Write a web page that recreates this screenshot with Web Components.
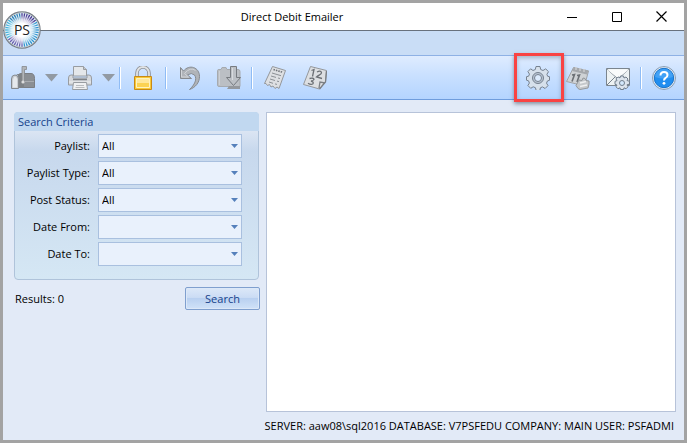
<!DOCTYPE html>
<html lang="en">
<head>
<meta charset="utf-8">
<title>Direct Debit Emailer</title>
<style>
html, body { height: 100%; margin: 0; }
body { font: 11px/16px "Open Sans", "Noto Sans", sans-serif; color: #000; }
</style>
</head>
<body>
<debit-app></debit-app>
<script>
const define = (name, html, init) => {
  const tpl = document.createElement('template');
  tpl.innerHTML = html;
  customElements.define(name, class extends HTMLElement {
    constructor() {
      super();
      this.attachShadow({ mode: 'open' }).append(tpl.content.cloneNode(true));
    }
    connectedCallback() { if (init) init(this, this.shadowRoot); }
  });
};

define('tool-button', `
<style>
:host { display: block; position: relative; flex: none; }
button { display: block; margin: 0; padding: 0; border: 0; background: none; }
:host([highlight])::after {
  content: ""; position: absolute; inset: -13px -14px -12px -12px;
  border: 3px solid #f94343; box-shadow: 0 2px 4px #3458, inset 0 2px 4px #3455;
  pointer-events: none;
}
</style>
<button type="button"><slot></slot></button>`,
(host, root) => root.querySelector('button').setAttribute('aria-label', host.getAttribute('name')));

define('split-button', `
<style>
:host { display: flex; align-items: center; gap: 10px; flex: none; }
button { display: block; padding: 0; border: 0; background: none; }
svg { display: block; }
</style>
<slot></slot>
<button type="button" aria-label="More options"><svg width="13" height="8"><path d="M0 0h13L6.500 7.500z" fill="#929aa3"/></svg></button>`);

define('tool-separator', `
<style>
:host { display: block; flex: none; width: 1px; height: 22px; margin: 0 10px; background: #8fbcf5; border-right: 1px solid #fff; }
:host([tight]) { margin-left: 4px; }
</style>`);

define('app-logo', `
<style>:host { display: block; } svg { display: block; } text { font: 14px "Open Sans", sans-serif; }</style>
<svg width="38" height="38" viewBox="0 0 38 38" role="img" aria-label="PS">
<defs>
<radialGradient id="glow"><stop offset=".45" stop-color="#fff"/><stop offset=".7" stop-color="#fff" stop-opacity=".75"/><stop offset="1" stop-color="#fff" stop-opacity="0"/></radialGradient>
</defs>
<circle cx="19" cy="19" r="18" fill="#e6f3fb" stroke="#777d84" stroke-width="1.500"/>
<g id="rays" stroke-width="1.300"></g>
<circle cx="19" cy="19" r="15" fill="url(#glow)"/>
<circle cx="19" cy="19" r="17.300" fill="none" stroke="#b9c4cb"/>
<text x="19" y="24" text-anchor="middle" fill="#222">PS</text>
</svg>`,
(host, root) => {
  const g = root.getElementById('rays');
  for (let i = 0; i < 40; i++) {
    const a = i * 9;
    const l = document.createElementNS('http://www.w3.org/2000/svg', 'line');
    l.setAttribute('x1', 19); l.setAttribute('x2', 19);
    l.setAttribute('y1', 2); l.setAttribute('y2', 12);
    l.setAttribute('transform', `rotate(${a} 19 19)`);
    l.setAttribute('stroke', a < 55 ? '#4b3a93' : a < 180 ? '#2d93cf' : a < 235 ? '#6a5fae' : a < 310 ? '#3eb0da' : '#2b7fb5');
    g.append(l);
  }
});

define('window-bar', `
<style>
:host { display: grid; grid-template-columns: 1fr auto; align-items: center; height: 27px; padding-left: 32px; background: #fff; border-bottom: 1px solid #68717d; }
h1 { margin: 0; font-weight: normal; font-size: 11px; line-height: 16px; text-align: center; }
.controls { display: flex; justify-content: flex-end; }
button { display: grid; place-items: center; width: 45px; height: 26px; padding: 0; border: 0; background: none; }
svg { fill: none; stroke: #000; }
</style>
<h1><slot></slot></h1>
<div class="controls">
<button type="button" aria-label="Minimize"><svg width="10" height="10"><path d="M0 5.500h10"/></svg></button>
<button type="button" aria-label="Maximize"><svg width="10" height="10"><path d="M.5.5h9v9h-9z"/></svg></button>
<button type="button" aria-label="Close"><svg width="11" height="11"><path d="M.5.5l10 10M10.500.5l-10 10" stroke-width="1.200"/></svg></button>
</div>`);

define('combo-field', `
<style>
:host { display: grid; grid-template-columns: 75px minmax(0, 1fr); column-gap: 8px; align-items: center; }
label { text-align: right; white-space: nowrap; }
.box { position: relative; display: block; }
select { appearance: none; display: block; box-sizing: border-box; width: 100%; height: 24px; margin: 0; padding: 0 18px 0 3px; border: 1px solid #a9c0df; border-radius: 0; background: #e9f1fc; font: inherit; color: #000; }
svg { position: absolute; right: 3px; top: 10px; pointer-events: none; }
</style>
<label for="value"></label>
<span class="box"><select id="value"><option></option></select>
<svg width="9" height="5"><path d="M1 0h7L4.500 4z" fill="#5580bb"/></svg></span>`,
(host, root) => {
  root.querySelector('label').textContent = host.getAttribute('label');
  root.querySelector('option').textContent = host.getAttribute('value') || '';
});

define('criteria-panel', `
<style>
:host { display: block; border: 1px solid #afc3da; border-radius: 4px; background: linear-gradient(#dbe5f3 18px, #c7d8ed 38px, #d5e7f4); }
h2 { margin: -1px -1px 0; padding: 1px 4px 0; height: 18px; font-size: inherit; line-height: 18px; font-weight: normal; color: #15428b; background: #c1d8f0; border-radius: 4px 4px 0 0; }
.fields { display: grid; gap: 3px; padding: 3px 16px 13px 0; }
</style>
<h2><slot name="heading"></slot></h2>
<div class="fields"><slot></slot></div>`);

define('search-button', `
<style>
button { display: block; box-sizing: border-box; width: 75px; height: 23px; padding: 0; border: 1px solid #7f9fce; border-radius: 2px; box-shadow: inset 0 0 0 1px #dce8f8; background: linear-gradient(#dce8f8, #cbdcf4 45%, #b9d0f0 50%, #d0e2f8); font: inherit; color: #15428b; }
</style>
<button type="button"><slot></slot></button>`);

define('debit-app', `
<style>
:host { display: flex; flex-direction: column; box-sizing: border-box; min-height: 100%; border: 3px solid #a3a3a3; background: #e2eaf7; position: relative; }
app-logo { position: absolute; left: 0; top: 8px; }
.ribbon { height: 24px; background: #c9ddf6; border-bottom: 1px solid #8eb1e5; }
.toolbar { display: flex; align-items: center; height: 43px; padding: 0 8px; background: linear-gradient(#dfecff, #c9e0ff 45%, #b4d4ff); border-bottom: 1px solid #6f9ddd; }
.toolbar svg { display: block; }
split-button + split-button { margin-left: 10px; }
.spaced { margin-left: 16px; }
.push { margin-left: auto; }
main { flex: 1; display: grid; grid-template-columns: 245px minmax(0, 1fr); column-gap: 7px; padding: 12px 8px 0 11px; }
.actions { display: flex; justify-content: space-between; align-items: center; margin: 7px -1px 0 1px; }
.results { border: 1px solid #b7c3d9; background: #fff; }
footer { padding: 6px 10px 6px; text-align: right; white-space: nowrap; }
</style>
<window-bar>Direct Debit Emailer</window-bar>
<div class="ribbon"></div>
<app-logo></app-logo>
<div class="toolbar" role="toolbar">
<split-button><tool-button name="Post"><svg width="24" height="24">
<path d="M10 7.500h10q3.500 0 3.500 5v9H7V12q0-4.500 3-4.500z" fill="#8b8f94" stroke="#7b7e83"/>
<path d="M.5 22.500V13q0-4 3.500-4t3.500 4v9.500z" fill="#c9cdd2" stroke="#85898e"/>
<path d="M2 21.500V13.500q1-3 2-3t2 2v9z" fill="#e5e8ec"/><path d="M8 22V12q0-3-3-4h6q2 1 2 5v9z" fill="#7e8286"/>
<path d="M11 16V.5h4.500v3h-2v12z" fill="#b3b6ba" stroke="#85888c" stroke-width=".8"/><circle cx="12" cy="16" r="1.600" fill="#ddd"/><path d="M14 15.500h9" stroke="#a9acb0"/>
</svg></tool-button></split-button>
<split-button><tool-button name="Print"><svg width="24" height="24" stroke="#989ca1">
<path d="M5.500 10V.5h10l3 3V10z" fill="#e4e7ea"/><path d="M15.500.5v3h3" fill="#c5c8cc"/>
<path d="M.5 12q0-3 2.500-3h2v3h14V9h2q2.500 0 2.500 3v7H.5z" fill="#d5d8dc"/>
<path d="M5 13.500h14" stroke="#7f8388" stroke-width="1.500"/><path d="M1 16h22" stroke="#eceef0"/>
<path d="M5.500 16.500h13l1 7h-15z" fill="#eff0f2"/><path d="M8 19.500h8M7.500 21.500h9" stroke="#b9bcc0"/>
</svg></tool-button></split-button>
<tool-separator tight></tool-separator>
<tool-button name="Lock"><svg width="24" height="24">
<path d="M6 12V7a6 6 0 0 1 12 0v5" fill="none" stroke="#909399" stroke-width="3.600"/><path d="M6 12V7a6 6 0 0 1 12 0v5" fill="none" stroke="#e0e2e4" stroke-width="1.800"/>
<path d="M3.500 10.500h17v13h-17z" fill="#f9c936" stroke="#c88916"/><path d="M5.500 12.500h13v9h-13z" fill="#ffe79a" stroke="#fff2bd"/><path d="M6 17h12v4H6z" fill="#fbd252"/>
</svg></tool-button>
<tool-separator></tool-separator>
<tool-button name="Undo"><svg width="24" height="24">
<path d="M3.500 1.500v11h11l-4-3.500q4-3 7 0c3 4 0 10-5 14.500 6-2 10-7 10-13C22.500 1 12-2 6.500 5z" fill="#b0b4b9" stroke="#868a8f"/><path d="M4.500 4v7h7L7.500 7.500q6-7 11-3" fill="none" stroke="#d2d5d9"/>
</svg></tool-button>
<tool-button class="spaced" name="Import"><svg width="24" height="24">
<path d="M.5 4.500q0-1 1.500-1h2l1-2h4l1 2h11q2 0 2 2V20.500H2Q.5 20.500.5 19z" fill="#bbbfc4" stroke="#a6aaaf"/><path d="M2.500 5v14" stroke="#cdd0d4"/>
<path d="M12 20h11v3H10z" fill="#94989d"/><path d="M13.500.5h6v11h4L16.500 19.500l-7-8h4z" fill="#bcc0c5" stroke="#777b80"/><path d="M15.500 2v12" stroke="#d8dbde"/>
</svg></tool-button>
<tool-separator></tool-separator>
<tool-button name="Report"><svg width="24" height="24">
<path d="M9.500.5l13 4-6.500 18-2-1.500-2 1.500-2-2.500-2 1-1.500-2.500-2 1-1.500-2-1.500 0z" fill="#dddfe2" stroke="#94979b"/>
<path d="M10.500 3.500l9 2.700" stroke="#707479" stroke-width="1.600" stroke-dasharray="1.500 1"/>
<path d="M9 7l9 2.700M8 10l5 1.400m2 .6l2 .5M7 13l5 1.500m2 .6l2 .5M6 16l4 1.300m2 .6l2 .5" fill="none" stroke="#8c9095"/>
</svg></tool-button>
<tool-button class="spaced" name="Numbers"><svg width="24" height="24">
<path d="M7.500.5l16 4-1 11-6 7.500L.5 18.500z" fill="#dddfe2" stroke="#94979b"/><path d="M23.500 5l-1 11-6 7M16 22l1-6 5 1" fill="none" stroke="#7b7f84" stroke-width="1.300"/>
<path d="M8.500 4.500l2.500-1-1.500 7M14 6q3.500-2 4.500.5c.5 2-3 2.500-5 4.500l5.500 1.500M6.500 12.500q4.500-1 4.500 1-1 1.500-3 1.500 3 .8 2 2.800-2 1.500-5-.5" fill="none" stroke="#6c7075" stroke-width="1.300"/>
</svg></tool-button>
<tool-button class="push" name="Settings" highlight><svg width="24" height="24">
<g fill="#d6e0eb" stroke="#76818f"><path d="M10 .5h4l.7 3 2.300 1 2.700-1.600 2.800 2.800L20.900 8.300l.8 2 1.800.4v3.600l-2 .6-1 2.200 1.500 2.500-2.900 2.900-2.600-1.600-2.100.9-.6 2.700h-3.600l-.8-2.800-2.200-.9-2.500 1.500-2.800-2.800 1.500-2.500-.9-2.200-2-.6v-3.500l2.100-.5.9-2.100-1.600-2.500 2.700-2.800L7 4.500l2.300-1z"/><circle cx="12" cy="12" r="5.500" fill="#b9c5d3"/><circle cx="12" cy="12" r="3.500" fill="#dcebfd"/></g>
</svg></tool-button>
<tool-button class="spaced" name="Calendar setup"><svg width="24" height="24">
<path d="M7.500 1.500l15 3.500-4 15-18-4.500z" fill="#cfd2d5" stroke="#a0a3a7"/><path d="M8 1l14.500 3.500-1.500 4L6 5z" fill="#a5a8ac"/><path d="M10 1v3m4-2v3m4-2v3" stroke="#dcdee0"/>
<path d="M6 9l2.500-.5-2.500 7m5-6l2.500-.5-2.500 7" fill="none" stroke="#6c7075" stroke-width="1.600"/>
<path d="M13 14l3 .5 1-2.500 2 .5 1 2 3 .5v3l-1 4-8 1.500-2-1-2-3z" fill="#c5c8cb" stroke="#94989c"/><path d="M14 17l6-1.500m-6 5l7-1.500" stroke="#eeeff0" stroke-width="1.500"/>
</svg></tool-button>
<tool-button class="spaced" name="Mail setup"><svg width="24" height="24">
<path d="M.5 2.500h23v17H.5z" fill="#edf2f3" stroke="#7b858e"/><path d="M1 19l8-8m14 8l-8-8M1 3l11 10L23 3" fill="none" stroke="#76818c"/><path d="M1 3.500h22L12 12z" fill="#f9fbfb"/>
<path d="M14.500 10h3l.5 2 2-1 2 2-1 1.500 2.500.8v2.800l-2.500.7 1 2-2 2-2-1-.5 1.700h-3l-.5-1.700-2 1-2-2 1-1.800-2-.7v-3l2-.7-1-1.700 2-2 2 1z" fill="#dce4ec" stroke="#717e8c"/><circle cx="16" cy="17" r="2.500" fill="#d3e8fc" stroke="#717e8c"/>
</svg></tool-button>
<tool-separator></tool-separator>
<tool-button name="Help"><svg width="24" height="24">
<circle cx="12" cy="12" r="11.500" fill="#dce7f3" stroke="#8b9eb3"/><circle cx="12" cy="12" r="9.700" fill="#218ef0" stroke="#1672ca"/><path d="M3 11a9 8 0 0 1 18 0q-9 3-18 0" fill="#57adfa" opacity=".6"/>
<path d="M8.500 9.500q0-3.500 3.500-3.500t3.500 3q0 1.800-2 3-1.500.8-1.500 2.500" fill="none" stroke="#fff" stroke-width="2"/><circle cx="12" cy="17.300" r="1.400" fill="#fff"/>
</svg></tool-button>
</div>
<main>
<section>
<criteria-panel><span slot="heading">Search Criteria</span>
<combo-field label="Paylist:" value="All"></combo-field>
<combo-field label="Paylist Type:" value="All"></combo-field>
<combo-field label="Post Status:" value="All"></combo-field>
<combo-field label="Date From:"></combo-field>
<combo-field label="Date To:"></combo-field>
</criteria-panel>
<div class="actions"><span>Results: 0</span><search-button>Search</search-button></div>
</section>
<section class="results" aria-label="Results"></section>
</main>
<footer>SERVER: aaw08\\sql2016 DATABASE: V7PSFEDU COMPANY: MAIN USER: PSFADMI</footer>`);
</script>
</body>
</html>
